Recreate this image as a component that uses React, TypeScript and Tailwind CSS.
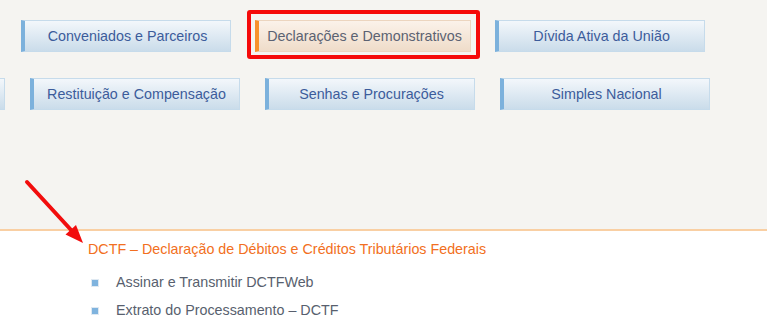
import React from "react";

const font = { fontFamily: '"Liberation Sans", Arial, sans-serif' };

function NavButton({ label, active }: { label: string; active?: boolean }) {
  if (active) {
    return (
      <div className="relative flex h-[32px] w-[216px] shrink-0 items-center justify-center border border-[#ecd5bf] border-l-[4px] border-l-[#f7922c] bg-gradient-to-b from-[#fbf2ea] to-[#efdcc9] pt-[2px] text-[14.3px] text-[#5b6272]">
        {label}
        <div className="pointer-events-none absolute -left-[12px] -top-[11px] h-[49px] w-[233px] rounded-[3px] border-[4px] border-[#f50a0a]" />
      </div>
    );
  }
  return (
    <div className="flex h-[32px] w-[210px] shrink-0 items-center justify-center border border-[#c6dbeb] border-l-[4px] border-l-[#7cb1dc] bg-gradient-to-b from-[#f3f7fb] to-[#cadcea] pt-[2px] text-[14.3px] text-[#3c5c9b]">
      {label}
    </div>
  );
}

export default function App() {
  return (
    <div className="relative h-[329px] w-[767px] overflow-hidden bg-white" style={font}>
      <div className="h-[229px] bg-[#f5f4f1] pt-[20px]">
        <div className="flex gap-[24px] pl-[21px]">
          <NavButton label="Conveniados e Parceiros" />
          <NavButton label="Declarações e Demonstrativos" active />
          <NavButton label="Dívida Ativa da União" />
        </div>
        <div className="mt-[26px] flex gap-[25px] -ml-[205px]">
          <NavButton label="" />
          <NavButton label="Restituição e Compensação" />
          <NavButton label="Senhas e Procurações" />
          <NavButton label="Simples Nacional" />
        </div>
      </div>
      <div className="border-t-[2px] border-[#f9cfa3] pl-[88px] pt-[8px]">
        <h2 className="text-[14.3px] leading-[20px] text-[#f26f21]">
          DCTF – Declaração de Débitos e Créditos Tributários Federais
        </h2>
        <ul className="mt-[14px] flex flex-col gap-[8px]">
          {["Assinar e Transmitir DCTFWeb", "Extrato do Processamento – DCTF"].map((t) => (
            <li key={t} className="flex h-[20px] items-center text-[14.3px] text-[#585f6e]">
              <span className="ml-[4px] mr-[18px] h-[6px] w-[6px] bg-[#7fb3de] shadow-[0_0_0_1px_#dfe9f2]" />
              {t}
            </li>
          ))}
        </ul>
      </div>
      <svg className="pointer-events-none absolute left-0 top-0" width="767" height="329">
        <line x1="27" y1="182" x2="72" y2="231" stroke="#f20d0d" strokeWidth="4" strokeLinecap="round" />
        <polygon points="83,243 65.5,234.5 76,225" fill="#f20d0d" />
      </svg>
    </div>
  );
}
